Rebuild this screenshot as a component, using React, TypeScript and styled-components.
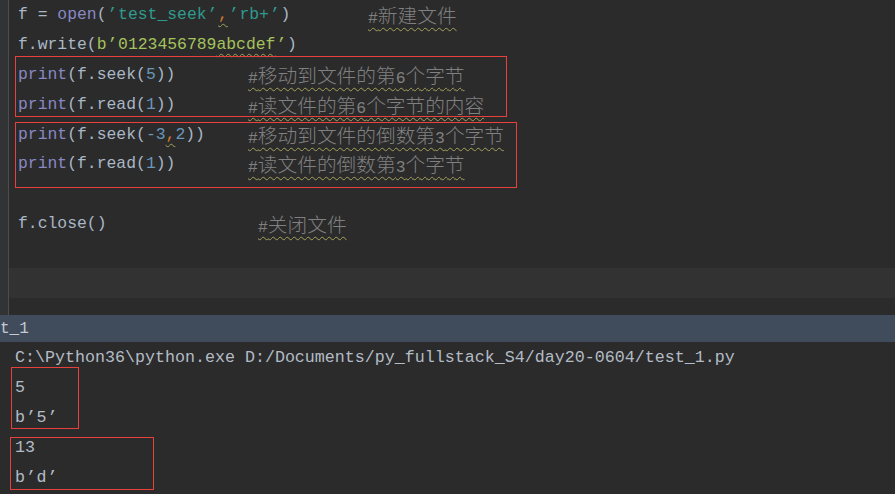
import React from "react";
import styled, { createGlobalStyle } from "styled-components";

const Global = createGlobalStyle`
  html, body { margin: 0; padding: 0; background: #2b2b2b; }
  body { width: 895px; height: 494px; overflow: hidden; }
`;

const C = {
  text: "#a9b7c6",
  builtin: "#8888c6",
  teal: "#2f9a8d",
  bytes: "#a5c25c",
  num: "#6897bb",
  punct: "#cc7832",
  comment: "#808080",
  squiggle: "#a3a35c",
  red: "#e8403a",
};

const Page = styled.div`
  width: 895px;
  height: 494px;
  display: flex;
  flex-direction: column;
  background: #2b2b2b;
  font-family: "Liberation Mono", "Noto Sans CJK SC", monospace;
  font-size: 16.4px;
  color: ${C.text};
`;

const Editor = styled.div`
  position: relative;
  height: 315px;
  display: flex;
  flex-shrink: 0;
`;

const Gutter = styled.div`
  width: 8px;
  background: #313335;
  border-right: 1px solid #4d4d4d;
  flex-shrink: 0;
`;

const CodeArea = styled.div`
  flex: 1;
  display: flex;
  flex-direction: column;
`;

const Line = styled.div<{ $current?: boolean }>`
  height: 29.8px;
  display: flex;
  align-items: center;
  padding-left: 9px;
  white-space: pre;
  background: ${(p) => (p.$current ? "#323232" : "transparent")};
`;

const Code = styled.span<{ $w?: number }>`
  display: inline-block;
  width: ${(p) => (p.$w ? `${p.$w}px` : "auto")};
  flex-shrink: 0;
`;

const Tok = styled.span<{ $c: string; $warn?: boolean }>`
  color: ${(p) => p.$c};
  text-decoration: ${(p) => (p.$warn ? `underline wavy ${C.squiggle}` : "none")};
  text-decoration-thickness: 1px;
  text-underline-offset: 4px;
`;

const Quote = styled.span<{ $c: string }>`
  display: inline-block;
  width: 11.5px;
  padding-left: 1px;
  box-sizing: border-box;
  color: ${(p) => p.$c};
`;

const Comment = styled.span`
  color: ${C.comment};
  text-decoration: underline wavy ${C.squiggle};
  text-decoration-thickness: 1px;
  text-underline-offset: 4px;
`;

const Han = styled.span`
  font-family: "Noto Sans CJK SC", sans-serif;
  font-size: 19.7px;
  font-weight: 300;
`;

const PanelHeader = styled.div`
  height: 27px;
  flex-shrink: 0;
  background: #404b5c;
  display: flex;
  align-items: center;
  color: #c4c9cf;
  font-size: 16px;
  white-space: pre;
`;

const Console = styled.div`
  position: relative;
  flex: 1;
  display: flex;
  flex-direction: column;
  padding-left: 15px;
  color: #b3bcc6;
  font-size: 16.67px;
`;

const OutLine = styled.div`
  height: 30px;
  display: flex;
  align-items: center;
  white-space: pre;
`;

const Mark = styled.div<{ $l: number; $t: number; $w: number; $h: number }>`
  position: absolute;
  left: ${(p) => p.$l}px;
  top: ${(p) => p.$t}px;
  width: ${(p) => p.$w}px;
  height: ${(p) => p.$h}px;
  box-sizing: border-box;
  border: 1px solid ${C.red};
  pointer-events: none;
`;

function Cmt({ text }: { text: string }) {
  const parts = text.split(/([\u4e00-\u9fff]+)/).filter(Boolean);
  return (
    <Comment>
      {parts.map((p, i) =>
        /[\u4e00-\u9fff]/.test(p) ? <Han key={i}>{p}</Han> : <span key={i}>{p}</span>
      )}
    </Comment>
  );
}

const Q = ({ c }: { c: string }) => <Quote $c={c}>’</Quote>;

export default function App() {
  return (
    <>
      <Global />
      <Page>
        <Editor>
          <Gutter />
          <CodeArea>
            <Line>
              <Code $w={350}>
                <Tok $c={C.text}>f = </Tok>
                <Tok $c={C.builtin}>open</Tok>
                <Tok $c={C.text}>(</Tok>
                <Q c={C.teal} />
                <Tok $c={C.teal}>test_seek</Tok>
                <Q c={C.teal} />
                <Tok $c={C.punct} $warn>,</Tok>
                <Q c={C.teal} />
                <Tok $c={C.teal}>rb+</Tok>
                <Q c={C.teal} />
                <Tok $c={C.text}>)</Tok>
              </Code>
              <Cmt text="#新建文件" />
            </Line>
            <Line>
              <Code>
                <Tok $c={C.text}>f.write(</Tok>
                <Tok $c={C.bytes}>b</Tok>
                <Q c={C.bytes} />
                <Tok $c={C.bytes}>0123456789</Tok>
                <Tok $c={C.bytes} $warn>abcdef</Tok>
                <Q c={C.bytes} />
                <Tok $c={C.text}>)</Tok>
              </Code>
            </Line>
            <Line>
              <Code $w={230}>
                <Tok $c={C.builtin}>print</Tok>
                <Tok $c={C.text}>(f.seek(</Tok>
                <Tok $c={C.num}>5</Tok>
                <Tok $c={C.text}>))</Tok>
              </Code>
              <Cmt text="#移动到文件的第6个字节" />
            </Line>
            <Line>
              <Code $w={230}>
                <Tok $c={C.builtin}>print</Tok>
                <Tok $c={C.text}>(f.read(</Tok>
                <Tok $c={C.num}>1</Tok>
                <Tok $c={C.text}>))</Tok>
              </Code>
              <Cmt text="#读文件的第6个字节的内容" />
            </Line>
            <Line>
              <Code $w={230}>
                <Tok $c={C.builtin}>print</Tok>
                <Tok $c={C.text}>(f.seek(</Tok>
                <Tok $c={C.num}>-3</Tok>
                <Tok $c={C.punct} $warn>,</Tok>
                <Tok $c={C.num}>2</Tok>
                <Tok $c={C.text}>))</Tok>
              </Code>
              <Cmt text="#移动到文件的倒数第3个字节" />
            </Line>
            <Line>
              <Code $w={230}>
                <Tok $c={C.builtin}>print</Tok>
                <Tok $c={C.text}>(f.read(</Tok>
                <Tok $c={C.num}>1</Tok>
                <Tok $c={C.text}>))</Tok>
              </Code>
              <Cmt text="#读文件的倒数第3个字节" />
            </Line>
            <Line />
            <Line>
              <Code $w={240}>
                <Tok $c={C.text}>f.close()</Tok>
              </Code>
              <Cmt text="#关闭文件" />
            </Line>
            <Line />
            <Line $current />
          </CodeArea>
          <Mark $l={15} $t={56} $w={492} $h={61} />
          <Mark $l={15} $t={122} $w={502} $h={66} />
        </Editor>
        <PanelHeader>t_1</PanelHeader>
        <Console>
          <OutLine>C:\Python36\python.exe D:/Documents/py_fullstack_S4/day20-0604/test_1.py</OutLine>
          <OutLine>5</OutLine>
          <OutLine>
            b<Q c="#b3bcc6" />5<Q c="#b3bcc6" />
          </OutLine>
          <OutLine>13</OutLine>
          <OutLine>
            b<Q c="#b3bcc6" />d<Q c="#b3bcc6" />
          </OutLine>
          <Mark $l={11} $t={25} $w={68} $h={62} />
          <Mark $l={10} $t={95} $w={144} $h={53} />
        </Console>
      </Page>
    </>
  );
}
